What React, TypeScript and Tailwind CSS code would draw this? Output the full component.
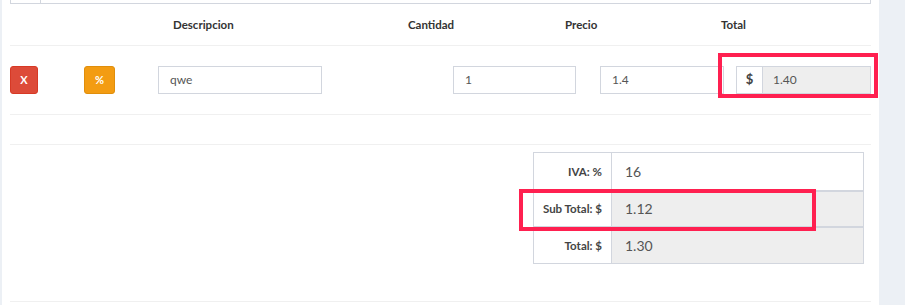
import React from 'react';

const font = { fontFamily: 'Lato, "Noto Sans", sans-serif' };

const totals = [
  { label: 'IVA: %', value: '16', readOnly: false },
  { label: 'Sub Total: $', value: '1.12', readOnly: true },
  { label: 'Total: $', value: '1.30', readOnly: true },
];

export default function App() {
  return (
    <div className="flex w-[905px] h-[305px] bg-[#ecf0f5] overflow-hidden" style={font}>
      <div className="relative ml-[2px] w-[877px] h-full bg-white">
        {/* top input, cut off */}
        <div className="mx-[8px] h-[4px] border-x border-b border-[#d2d6de] flex">
          <div className="w-[30px] border-r border-[#d2d6de]" />
        </div>

        {/* header */}
        <div className="mx-[8px] h-[42px] flex items-center border-b border-[#f0f0f0] text-[11.5px] font-bold text-[#333]">
          <span className="ml-[163px] w-[235px]">Descripcion</span>
          <span className="w-[157px]">Cantidad</span>
          <span className="w-[156px]">Precio</span>
          <span>Total</span>
        </div>

        {/* item row */}
        <div className="mx-[8px] h-[69px] flex items-center border-b border-[#f0f0f0] text-[12px] text-[#555]">
          <button className="w-[28px] h-[28px] rounded-[3px] bg-[#dd4b39] border border-[#d73925] text-white text-[11px] font-bold">X</button>
          <button className="ml-[46px] w-[31px] h-[28px] rounded-[3px] bg-[#f39c12] border border-[#e08e0b] text-white text-[11px] font-bold">%</button>
          <div className="ml-[43px] w-[164px] h-[28px] border border-[#d2d6de] flex items-center px-[11px]">qwe</div>
          <div className="ml-[131px] w-[123px] h-[28px] border border-[#d2d6de] flex items-center px-[11px]">1</div>
          <div className="ml-[24px] w-[124px] h-[28px] border border-[#d2d6de] flex items-center px-[11px]">1.4</div>
          <div className="ml-[12px] w-[135px] h-[28px] flex">
            <div className="w-[27px] border border-[#d2d6de] flex items-center justify-center font-bold text-[13px] text-[#444]">$</div>
            <div className="flex-1 border-y border-r border-[#d2d6de] bg-[#eeeeee] flex items-center px-[10px]">1.40</div>
          </div>
        </div>

        {/* empty row */}
        <div className="mx-[8px] h-[30px] border-b border-[#f0f0f0]" />

        {/* totals */}
        <div className="mx-[8px] h-[157px] border-b border-[#f0f0f0] pt-[7px]">
          <div className="ml-[523px] w-[331px] border border-[#d2d6de]">
            {totals.map((t, i) => (
              <div key={t.label} className={`flex h-[36.5px] ${i > 0 ? 'border-t-2 border-[#d2d6de]' : ''}`}>
                <div className="w-[78px] border-r border-[#d2d6de] flex items-center justify-end pr-[9px] text-[11.5px] font-bold text-[#444]">
                  {t.label}
                </div>
                <div className={`flex-1 flex items-center px-[13px] text-[14px] text-[#555] ${t.readOnly ? 'bg-[#eeeeee]' : 'bg-white'}`}>
                  {t.value}
                </div>
              </div>
            ))}
          </div>
        </div>

        {/* highlight boxes */}
        <div className="absolute left-[716px] top-[53px] w-[160px] h-[45px] border-4 border-[#ff2050]" />
        <div className="absolute left-[517px] top-[189px] w-[297px] h-[42px] border-4 border-[#ff2050]" />
      </div>
    </div>
  );
}
